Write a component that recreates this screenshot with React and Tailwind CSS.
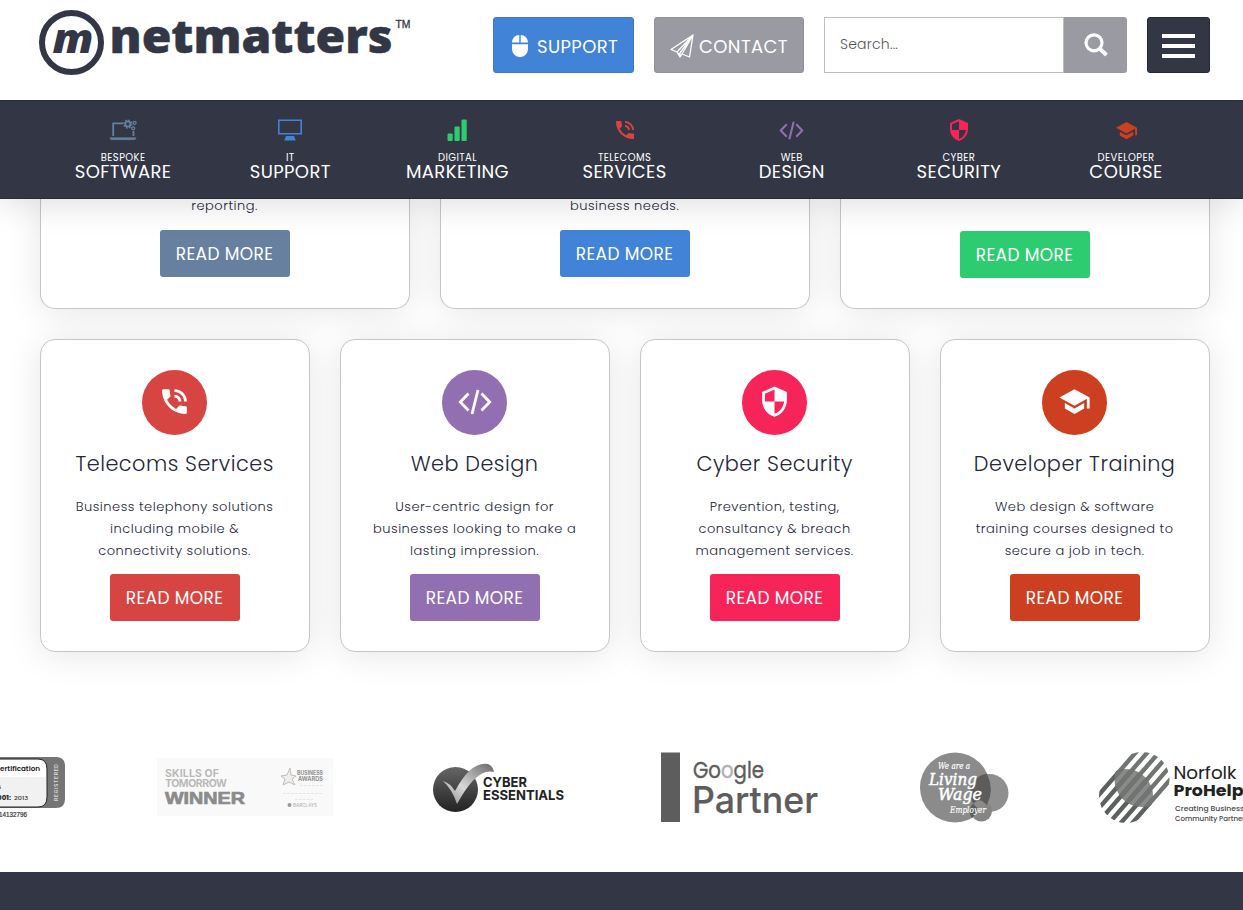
import React from 'react';
import { MdPhoneInTalk, MdSecurity, MdSchool } from 'react-icons/md';

function Code({ className }) {
  return (
    <svg viewBox="0 0 34 26" className={className} fill="none" stroke="currentColor" strokeWidth="2.8">
      <path d="M10.500 4.500 2.300 13l8.200 8.500M23.500 4.500l8.200 8.500-8.200 8.500" />
      <path d="M20 1l-6 24" />
    </svg>
  );
}

function Laptop({ className }) {
  return (
    <svg viewBox="0 0 28 22" className={className} fill="none" stroke="currentColor">
      <path d="M4.200 17V4.300H14M24.500 17v-5" strokeWidth="1.800" />
      <path d="M1 18.700h26c0 1.400-.8 2-2 2H3c-1.200 0-2-.6-2-2z" fill="currentColor" strokeWidth=".5" />
      <circle cx="18.800" cy="5" r="2.600" strokeWidth="1.800" />
      <circle cx="18.800" cy="5" r="4" strokeWidth="1.300" strokeDasharray="1.600 1.540" />
      <circle cx="25.600" cy="3.800" r="1.500" strokeWidth="1.300" />
      <circle cx="24.200" cy="9.300" r="1.500" strokeWidth="1.300" />
    </svg>
  );
}

function Monitor({ className }) {
  return (
    <svg viewBox="0 0 24 22" className={className} fill="none" stroke="currentColor">
      <path d="M.8 1.300h22.400v13.400H.8z" strokeWidth="1.600" />
      <path d="M8 17h8l1.800 4.500H6.200z" fill="currentColor" stroke="none" />
    </svg>
  );
}

function Bars({ className }) {
  return (
    <svg viewBox="0 0 20 22" className={className} fill="currentColor">
      <rect x="0.500" y="14.500" width="5.200" height="7.500" rx="1" />
      <rect x="7.500" y="7.500" width="5.200" height="14.500" rx="1" />
      <rect x="14.500" y="0.500" width="5.200" height="21.500" rx="1" />
    </svg>
  );
}

const nav = [
  ['BESPOKE', 'SOFTWARE', <Laptop className="h-[22px] w-7 text-[#67809f]" />],
  ['IT', 'SUPPORT', <Monitor className="h-[22px] w-6 text-[#4183d7]" />],
  ['DIGITAL', 'MARKETING', <Bars className="h-[22px] w-5 text-[#2ecc71]" />],
  ['TELECOMS', 'SERVICES', <MdPhoneInTalk className="size-6 text-[#d64541]" />],
  ['WEB', 'DESIGN', <Code className="h-[19px] w-[25px] text-[#926fb1]" />],
  ['CYBER', 'SECURITY', <MdSecurity className="size-6 text-[#f62459]" />],
  ['DEVELOPER', 'COURSE', <MdSchool className="size-[23px] text-[#cc3f21]" />],
];

const topCards = [
  ['reporting.', 'bg-[#67809f]', 'mt-[13px]'],
  ['business needs.', 'bg-[#4183d7]', 'mt-[13px]'],
  ['\u00a0', 'bg-[#2ecc71]', 'mt-[14px]'],
];

const cards = [
  ['Telecoms Services', ['Business telephony solutions', 'including mobile &', 'connectivity solutions.'], 'bg-[#d64541]', <MdPhoneInTalk className="size-[33px]" />],
  ['Web Design', ['User-centric design for', 'businesses looking to make a', 'lasting impression.'], 'bg-[#926fb1]', <Code className="h-[26px] w-[34px]" />],
  ['Cyber Security', ['Prevention, testing,', 'consultancy & breach', 'management services.'], 'bg-[#f62459]', <MdSecurity className="size-[33px]" />],
  ['Developer Training', ['Web design & software', 'training courses designed to', 'secure a job in tech.'], 'bg-[#cc3f21]', <MdSchool className="size-[33px]" />],
];

const cardBox = 'flex flex-col items-center rounded-[15px] border border-[#c6c6c6] bg-white text-center shadow-[0_3px_35px_rgba(0,0,0,0.1)]';

function ReadMore({ className }) {
  return (
    <a className={`flex h-[47px] w-[130px] shrink-0 items-center justify-center rounded-[3px] pt-[2px] text-[17px] tracking-[0.4px] text-white ${className}`}>
      READ MORE
    </a>
  );
}

function Logo() {
  return (
    <svg viewBox="0 0 375 70" className="mt-[8px] h-[70px] w-[375px]" fill="#333645">
      <circle cx="32.500" cy="34.500" r="29.500" fill="none" stroke="#333645" strokeWidth="6" />
      <text x="13.500" y="44.500" fontFamily="Open Sans" fontWeight="800" fontStyle="italic" fontSize="41" textLength="41" lengthAdjust="spacingAndGlyphs">m</text>
      <text x="70.500" y="45" fontFamily="Open Sans" fontWeight="800" fontSize="46" textLength="283" lengthAdjust="spacingAndGlyphs" stroke="#333645" strokeWidth=".5">netmatters</text>
      <text x="356.500" y="20" fontFamily="Liberation Sans" fontSize="11" textLength="15" lengthAdjust="spacingAndGlyphs" stroke="#333645" strokeWidth=".3">TM</text>
    </svg>
  );
}

function Certification() {
  return (
    <svg viewBox="0 0 66 90" className="h-[90px] w-[66px]" fontFamily="Poppins">
      <path d="M0 17h56q9 0 9 9v33q0 9-9 9H0z" fill="#757575" />
      <path d="M-2 19h40q9 0 9 10v28q0 10-9 10H-2z" fill="#f1f1f1" stroke="#222" strokeWidth="1" />
      <path d="M0 20h38q7 0 8 8v9H0z" fill="#fff" />
      <text x="0" y="31" fontSize="7.500" fontWeight="600" fill="#222" textLength="40" lengthAdjust="spacingAndGlyphs">ertification</text>
      <text x="-3" y="49" fontSize="7" fontWeight="700" fill="#222">s</text>
      <text x="-3" y="60" fontSize="7" fontWeight="700" fill="#222" textLength="14" lengthAdjust="spacingAndGlyphs">001:</text>
      <text x="14" y="60" fontSize="6" fill="#333" fontWeight="500" textLength="14" lengthAdjust="spacingAndGlyphs">2013</text>
      <text x="-1" y="77" fontSize="6.500" fill="#333" fontFamily="Liberation Sans" stroke="#333" strokeWidth=".2" textLength="28" lengthAdjust="spacingAndGlyphs">14132796</text>
      <text transform="translate(58 61) rotate(-90)" fontSize="5" fontFamily="Inter" fontWeight="600" fill="#ddd" textLength="37">REGISTERED</text>
    </svg>
  );
}

function Winner() {
  return (
    <svg viewBox="0 0 176 90" className="ml-[91px] h-[90px] w-[176px]" fontFamily="Inter" fill="#b9b9b9">
      <path d="M0 18h176v58H0z" fill="#f9f9f9" />
      <g fontWeight="700" fontSize="10.500">
        <text x="8" y="36.500" textLength="54">SKILLS OF</text>
        <text x="8" y="47" textLength="62">TOMORROW</text>
      </g>
      <text x="8" y="64" fontFamily="Liberation Sans" fontWeight="700" fontSize="17" fill="#8b8b8b" stroke="#8b8b8b" strokeWidth=".7" textLength="80" lengthAdjust="spacingAndGlyphs">WINNER</text>
      <path d="M133 28l1 7 5 1-4 3 3 6-6-3-6 3 2-6-4-3 6-1z" fill="#eee" stroke="#bdbdbd" />
      <g fontSize="6" fontWeight="700" fill="#909090">
        <text x="140" y="34.500" textLength="26" lengthAdjust="spacingAndGlyphs">BUSINESS</text>
        <text x="141" y="41" textLength="25" lengthAdjust="spacingAndGlyphs">AWARDS</text>
      </g>
      <path d="M143 45.500h23M126 53.500h40M138 59.500h18" stroke="#e6e6e6" strokeDasharray="3 1" />
      <circle cx="132.500" cy="65" r="2" fill="#999" />
      <text x="136" y="67" fontSize="4.500" fill="#aaa" textLength="24">BARCLAYS</text>
    </svg>
  );
}

function CyberEssentials() {
  return (
    <svg viewBox="0 0 134 90" className="ml-[99px] h-[90px] w-[134px]" fontFamily="Inter">
      <defs>
        <linearGradient id="disc" x1="0" y1="0" x2="0" y2="1"><stop stopColor="#666" /><stop offset="1" stopColor="#222" /></linearGradient>
        <linearGradient id="tick" x1="0" y1="1" x2="1" y2="0"><stop stopColor="#888" /><stop offset=".4" stopColor="#d8d8d8" /><stop offset="1" stopColor="#666" /></linearGradient>
      </defs>
      <circle cx="23.500" cy="49.500" r="22.500" fill="url(#disc)" />
      <path d="M11 41q7 2 12 10Q39 21 56 24q5 2 6 8-17-5-37 32-5-15-14-23z" fill="url(#tick)" />
      <g fontWeight="700" fontSize="13.500" fill="#222">
        <text x="51" y="47" textLength="44" lengthAdjust="spacingAndGlyphs">CYBER</text>
        <text x="51" y="59.500" textLength="81" lengthAdjust="spacingAndGlyphs">ESSENTIALS</text>
      </g>
    </svg>
  );
}

function GooglePartner() {
  return (
    <svg viewBox="0 0 160 90" className="ml-[95px] h-[90px] w-[160px]" fill="#5d5d5d" stroke="#5d5d5d">
      <path d="M0 12.500h19V82H0z" stroke="none" />
      <text x="32" y="38" fontFamily="Poppins" fontSize="23" strokeWidth=".4" textLength="71" lengthAdjust="spacingAndGlyphs">Go<tspan fill="#b0b0b0" stroke="#b0b0b0">o</tspan>gle</text>
      <text x="31" y="73" fontFamily="Inter" fontSize="37" fontWeight="500" strokeWidth=".2" textLength="126" lengthAdjust="spacingAndGlyphs">Partner</text>
    </svg>
  );
}

function LivingWage() {
  return (
    <svg viewBox="0 0 90 90" className="ml-[99px] h-[90px] w-[90px]" fontFamily="DejaVu Serif" fontStyle="italic" fill="#fff">
      <circle cx="69.500" cy="53" r="19" fill="#8f8f8f" />
      <circle cx="61.500" cy="71" r="10.500" fill="#858585" />
      <circle cx="35" cy="47.500" r="35" fill="#8b8b8b" />
      <path d="M58.500 37A19 19 0 0 0 60 69.500L52 78A10.500 10.500 0 0 1 54 63q5-4 8-2l5 4A35 35 0 0 0 67 34q-5 0-8.500 3z" fill="#5c5c5c" />
      <g stroke="#fff" strokeWidth=".2">
        <text x="18" y="29" fontSize="8.500" textLength="32" lengthAdjust="spacingAndGlyphs">We are a</text>
        <text x="9" y="44.500" fontSize="17" strokeWidth=".5" textLength="48" lengthAdjust="spacingAndGlyphs">Living</text>
        <text x="18" y="60" fontSize="17" strokeWidth=".5" textLength="44" lengthAdjust="spacingAndGlyphs">Wage</text>
        <text x="30" y="73" fontSize="9.500" textLength="36" lengthAdjust="spacingAndGlyphs">Employer</text>
      </g>
    </svg>
  );
}

function ProHelp() {
  return (
    <svg viewBox="0 0 145 90" className="ml-[88px] h-[90px] w-[145px]" fontFamily="Poppins" fill="#222">
      <defs>
        <clipPath id="upper"><circle cx="44" cy="39.500" r="27.500" /></clipPath>
        <clipPath id="lower"><circle cx="28" cy="56" r="27" /></clipPath>
      </defs>
      <g clipPath="url(#lower)">
        <circle cx="44" cy="39.500" r="27.500" fill="#8a8a8a" />
      </g>
      <g clipPath="url(#lower)" stroke="#5c615e" strokeWidth="4.400">
        <path d="M-21 80 46 3M-12 83 55 6M-3 86 64 9M6 89 73 12M15 92 82 15M-30 77 37 0M24 95 91 18" />
      </g>
      <g clipPath="url(#upper)" stroke="#707572" strokeWidth="4.400">
        <path d="M-21 80 46 3M-12 83 55 6M-3 86 64 9M6 89 73 12M15 92 82 15M24 95 91 18M-30 77 37 0" />
      </g>
      <text x="75.500" y="38.500" fontSize="17" textLength="63" lengthAdjust="spacingAndGlyphs">Norfolk</text>
      <text x="75.500" y="55.500" fontSize="16.500" fontWeight="700" textLength="70" lengthAdjust="spacingAndGlyphs">ProHelp</text>
      <g fontSize="7" fontWeight="500" fill="#444">
        <text x="77" y="70.500" textLength="69" lengthAdjust="spacingAndGlyphs">Creating Business</text>
        <text x="77" y="81" textLength="85" lengthAdjust="spacingAndGlyphs">Community Partnership</text>
      </g>
    </svg>
  );
}

export default function App() {
  return (
    <div className="flex h-[910px] w-full flex-col overflow-hidden bg-white font-[Poppins,Inter,sans-serif] text-[#333645]">
      <header className="relative z-20 flex h-[100px] shrink-0 items-start bg-white pl-[39px]">
        <Logo />
        <div className="mt-[17px] ml-[79px] flex gap-5 text-[18px] text-white">
          <a className="flex h-14 w-[141px] items-center rounded-[3px] border border-[#3a79ca] bg-[#4183d7] pl-[18px]">
            <svg viewBox="0 0 16 22" className="mt-[2px] mr-[9px] h-[22px] w-4" fill="#fff">
              <path d="M7.300 0v7.500H0C0 3 3.500 0 7.300 0zM8.700 0v7.500H16C16 3 12.500 0 8.700 0zM0 9.300h16V14a8 8 0 0 1-16 0z" />
            </svg>
            <span className="pt-[2px] tracking-[0.4px]">SUPPORT</span>
          </a>
          <a className="flex h-14 w-[150px] items-center rounded-[3px] border border-[#91919b] bg-[#9a9aa3] pl-[15px]">
            <svg viewBox="0 0 24 24" className="mt-[2px] mr-[5px] h-6 w-6" fill="none" stroke="#fff" strokeWidth="1.300" strokeLinejoin="round">
              <path d="M23 1 1 15.500l6 2.500L23 1l-3.500 22-7.500-3L23 1zM7 18l3 5 2-3M7 18l3 4M23 1 10 19v4" />
            </svg>
            <span className="pt-[2px] tracking-[0.4px]">CONTACT</span>
          </a>
          <div className="flex h-14 w-[303px]">
            <div className="flex w-[240px] items-center border border-[#bfbfbf] pb-px pl-[15px] text-[14px] font-light tracking-[0.2px] text-[#555]">Search...</div>
            <div className="flex flex-1 items-center justify-center rounded-r-[3px] bg-[#9a9aa3]">
              <svg viewBox="0 0 24 24" className="h-6 w-6" fill="none" stroke="#fff">
                <circle cx="10" cy="9.800" r="8" strokeWidth="3.200" />
                <path d="M15.500 15.500l7 6.500" strokeWidth="3.800" />
              </svg>
            </div>
          </div>
          <div className="flex h-14 w-[63px] flex-col items-center justify-center gap-[6px] rounded-[3px] border border-[#25273a] bg-[#333645] pt-px">
            <span className="h-1 w-[33px] bg-white" />
            <span className="h-1 w-[33px] bg-white" />
            <span className="h-1 w-[33px] bg-white" />
          </div>
        </div>
      </header>

      <nav className="relative z-10 grid h-[99px] shrink-0 grid-cols-7 border-y border-[#292b3a] bg-[#333645] pr-[33.400px] pl-[39.600px] text-white shadow-[0_3px_35px_rgba(0,0,0,0.15)]">
        {nav.map(([small, big, icon]) => (
          <a key={big} className="flex flex-col items-center pt-[17px]">
            <span className="flex h-6 items-center">{icon}</span>
            <span className="mt-[10px] text-[10px] leading-[11px] tracking-[0.4px]">{small}</span>
            <span className="text-[18px] leading-[18px] tracking-[0.4px]">{big}</span>
          </a>
        ))}
      </nav>

      <main className="flex flex-1 flex-col">
        <section className="grid grid-cols-3 gap-[30px] pr-[33.400px] pl-[39.600px]">
          {topCards.map(([text, color, gap]) => (
            <article key={color} className={`${cardBox} h-[110px] rounded-t-none border-t-0`}>
              <p className="-mt-[4px] text-[13px] leading-[22px] font-light tracking-[0.5px] text-[#23263a]">{text}</p>
              <ReadMore className={`${color} ${gap}`} />
            </article>
          ))}
        </section>
        <section className="mt-[30px] grid grid-cols-4 gap-[30px] pr-[33.400px] pl-[39.600px]">
          {cards.map(([title, lines, color, icon]) => (
            <article key={title} className={`${cardBox} h-[313px] pt-[30px]`}>
              <span className={`flex size-[65px] shrink-0 items-center justify-center rounded-full pb-[2px] text-white ${color}`}>{icon}</span>
              <h3 className="mt-[15px] text-[20.800px] leading-7 font-light tracking-[0.500px] text-[#23263a]">{title}</h3>
              <p className="mt-[18px] mb-[12px] text-[13px] leading-[22px] font-light tracking-[0.500px] text-[#23263a]">
                {lines.map((line) => <span key={line} className="block">{line}</span>)}
              </p>
              <ReadMore className={color} />
            </article>
          ))}
        </section>
        <section className="mt-[88px] flex">
          <Certification />
          <Winner />
          <CyberEssentials />
          <GooglePartner />
          <LivingWage />
          <ProHelp />
        </section>
      </main>
      <footer className="h-[38px] shrink-0 bg-[#333645]" />
    </div>
  );
}
